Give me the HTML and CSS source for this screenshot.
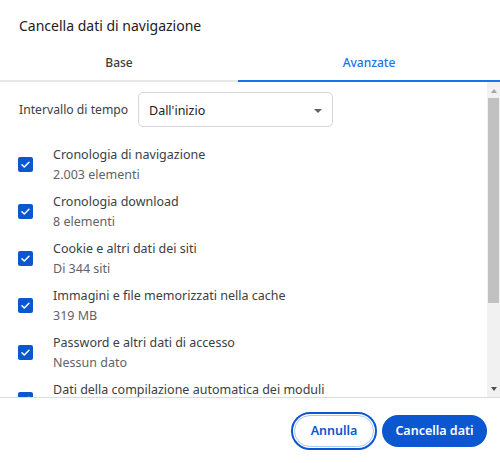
FILE: index.html
```html
<!DOCTYPE html>
<html lang="it">
<head>
<meta charset="utf-8">
<title>Cancella dati di navigazione</title>
<link rel="stylesheet" href="styles.css">
</head>
<body>
<div class="dialog">
  <div class="header">Cancella dati di navigazione</div>
  <div class="tabs">
    <div class="tab tab-base">Base</div>
    <div class="tab active">Avanzate</div>
  </div>
  <div class="body">
    <div class="content">
      <div class="range-row">
        <span class="range-label">Intervallo di tempo</span>
        <div class="select">
          <span>Dall'inizio</span>
          <span class="select-arrow"></span>
        </div>
      </div>
      <div class="item">
        <span class="checkbox"><svg viewBox="0 0 16 16" width="16" height="16"><path d="M4.2 8.2l2.5 2.4 5-5" fill="none" stroke="#fff" stroke-width="1.6" stroke-linecap="round" stroke-linejoin="round"/></svg></span>
        <div class="item-text"><div class="item-title">Cronologia di navigazione</div><div class="item-sub">2.003 elementi</div></div>
      </div>
      <div class="item">
        <span class="checkbox"><svg viewBox="0 0 16 16" width="16" height="16"><path d="M4.2 8.2l2.5 2.4 5-5" fill="none" stroke="#fff" stroke-width="1.6" stroke-linecap="round" stroke-linejoin="round"/></svg></span>
        <div class="item-text"><div class="item-title">Cronologia download</div><div class="item-sub">8 elementi</div></div>
      </div>
      <div class="item">
        <span class="checkbox"><svg viewBox="0 0 16 16" width="16" height="16"><path d="M4.2 8.2l2.5 2.4 5-5" fill="none" stroke="#fff" stroke-width="1.6" stroke-linecap="round" stroke-linejoin="round"/></svg></span>
        <div class="item-text"><div class="item-title">Cookie e altri dati dei siti</div><div class="item-sub">Di 344 siti</div></div>
      </div>
      <div class="item">
        <span class="checkbox"><svg viewBox="0 0 16 16" width="16" height="16"><path d="M4.2 8.2l2.5 2.4 5-5" fill="none" stroke="#fff" stroke-width="1.6" stroke-linecap="round" stroke-linejoin="round"/></svg></span>
        <div class="item-text"><div class="item-title">Immagini e file memorizzati nella cache</div><div class="item-sub">319 MB</div></div>
      </div>
      <div class="item">
        <span class="checkbox"><svg viewBox="0 0 16 16" width="16" height="16"><path d="M4.2 8.2l2.5 2.4 5-5" fill="none" stroke="#fff" stroke-width="1.6" stroke-linecap="round" stroke-linejoin="round"/></svg></span>
        <div class="item-text"><div class="item-title">Password e altri dati di accesso</div><div class="item-sub">Nessun dato</div></div>
      </div>
      <div class="item">
        <span class="checkbox"><svg viewBox="0 0 16 16" width="16" height="16"><path d="M4.2 8.2l2.5 2.4 5-5" fill="none" stroke="#fff" stroke-width="1.6" stroke-linecap="round" stroke-linejoin="round"/></svg></span>
        <div class="item-text"><div class="item-title">Dati della compilazione automatica dei moduli</div><div class="item-sub">&nbsp;</div></div>
      </div>
    </div>
    <div class="scrollbar">
      <span class="sb-arrow up"></span>
      <div class="sb-track"><div class="sb-thumb"></div></div>
      <span class="sb-arrow down"></span>
    </div>
  </div>
  <div class="footer">
    <button class="btn btn-cancel">Annulla</button>
    <button class="btn btn-primary">Cancella dati</button>
  </div>
</div>
</body>
</html>
```

FILE: styles.css
```css
* { box-sizing: border-box; }
html, body { margin: 0; padding: 0; }
body {
  width: 500px;
  height: 463px;
  background: #ffffff;
  font-family: "Noto Sans", "Open Sans", sans-serif;
  color: #3c4043;
  overflow: hidden;
}
.dialog {
  width: 500px;
  height: 463px;
  display: flex;
  flex-direction: column;
}
.header {
  height: 44px;
  padding: 16px 19px 0;
  font-size: 14px;
  line-height: 20px;
  color: #202124;
}
.tabs {
  display: flex;
  height: 38px;
}
.tab {
  flex: 1;
  display: flex;
  align-items: center;
  justify-content: center;
  font-size: 12px;
  font-weight: 500;
  color: #3c4043;
  border-bottom: 2px solid #e8e8e8;
  padding-top: 1px;
}
.tab-base {
  flex: none;
  width: 238px;
}
.tab.active {
  color: #1a73e8;
  border-bottom: 2px solid #1a73e8;
}
.body {
  height: 316px;
  display: flex;
  border-bottom: 1px solid #dadce0;
}
.content {
  flex: 1;
  overflow: hidden;
  padding: 10px 0 0 0;
}
.range-row {
  display: flex;
  align-items: center;
  padding-left: 19px;
  height: 35px;
}
.range-label {
  font-size: 12.2px;
  width: 119px;
}
.select {
  width: 195px;
  height: 35px;
  border: 1px solid #d3d6da;
  border-radius: 5px;
  display: flex;
  align-items: center;
  justify-content: space-between;
  padding: 2px 10px 0 10px;
  font-size: 12.5px;
  color: #202124;
}
.select-arrow {
  width: 0;
  height: 0;
  border-left: 4px solid transparent;
  border-right: 4px solid transparent;
  border-top: 4px solid #5f6368;
}
.item {
  display: flex;
  align-items: center;
  height: 47px;
  padding-left: 18px;
}
.range-row + .item { margin-top: 14px; }
.checkbox {
  width: 15px;
  height: 15px;
  border-radius: 2px;
  background: #0b57d0;
  display: flex;
  align-items: center;
  justify-content: center;
  flex: none;
  margin-right: 20px;
}
.checkbox svg { width: 15px; height: 15px; }
.item-text { display: flex; flex-direction: column; }
.item-title {
  font-size: 12.5px;
  line-height: 20px;
  color: #3c4043;
}
.item-sub {
  font-size: 12.5px;
  line-height: 19px;
  color: #5f6368;
}
.scrollbar {
  width: 13px;
  flex: none;
  background: #f1f1f1;
  display: flex;
  flex-direction: column;
  align-items: center;
}
.sb-arrow {
  width: 0;
  height: 0;
  border-left: 3.5px solid transparent;
  border-right: 3.5px solid transparent;
  flex: none;
}
.sb-arrow.up {
  border-bottom: 4px solid #a3a3a3;
  margin-top: 7px;
  margin-bottom: 5px;
}
.sb-arrow.down {
  border-top: 4px solid #505050;
  margin-top: 4px;
  margin-bottom: 6px;
}
.sb-track {
  flex: 1;
  width: 100%;
  padding: 0 1px;
}
.sb-thumb {
  height: 205px;
  background: #c1c1c1;
}
.footer {
  flex: 1;
  display: flex;
  justify-content: flex-end;
  align-items: center;
  gap: 8px;
  padding: 0 13px 0 0;
}
.btn {
  height: 32px;
  border-radius: 16px;
  font-family: "Noto Sans", "Open Sans", sans-serif;
  font-size: 12.5px;
  font-weight: 600;
  padding: 0;
  white-space: nowrap;
  cursor: pointer;
}
.btn-cancel {
  width: 80px;
  background: #ffffff;
  color: #0b57d0;
  border: 1px solid #a8c7fa;
  outline: 2px solid #0b57d0;
  outline-offset: 1px;
}
.btn-primary {
  width: 105px;
  background: #0b57d0;
  color: #ffffff;
  border: none;
}
```
